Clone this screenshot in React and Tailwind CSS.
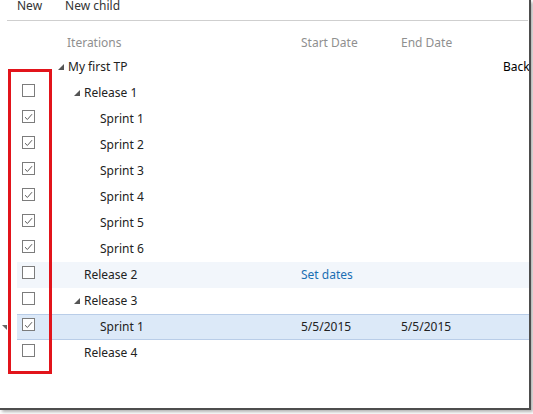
import React from "react";

const rows = [
  { name: "My first TP", depth: 0, expander: true, check: null, backlog: "Backlog" },
  { name: "Release 1", depth: 1, expander: true, check: false },
  { name: "Sprint 1", depth: 2, check: true },
  { name: "Sprint 2", depth: 2, check: true },
  { name: "Sprint 3", depth: 2, check: true },
  { name: "Sprint 4", depth: 2, check: true },
  { name: "Sprint 5", depth: 2, check: true },
  { name: "Sprint 6", depth: 2, check: true },
  { name: "Release 2", depth: 1, check: false, tint: true, setDates: true },
  { name: "Release 3", depth: 1, expander: true, check: false },
  { name: "Sprint 1", depth: 2, check: true, selected: true, start: "5/5/2015", end: "5/5/2015" },
  { name: "Release 4", depth: 1, check: false },
];

function Expander() {
  return (
    <svg width="6" height="6" viewBox="0 0 6 6" className="shrink-0">
      <polygon points="6,0 6,6 0,6" fill="#555" />
    </svg>
  );
}

function CheckBox({ checked }) {
  return (
    <div className="w-[13px] h-[13px] border border-[#7c7c7c] bg-white flex items-center justify-center">
      {checked && (
        <svg width="9" height="8" viewBox="0 0 9 8">
          <path d="M1 4.2 L3.4 6.5 L8 1.2" fill="none" stroke="#5a5a5a" strokeWidth="1" />
        </svg>
      )}
    </div>
  );
}

export default function App() {
  return (
    <div
      className="w-[533px] h-[414px] bg-white text-[12px] text-[#222]"
      style={{ fontFamily: '"Noto Sans", "Open Sans", sans-serif' }}
    >
      <div className="relative w-[531px] h-[410px] overflow-hidden border-r-2 border-b-2 border-[#4d4d4d] shadow-[2px_2px_3px_rgba(0,0,0,0.3)]">
        {/* Toolbar */}
        <div className="h-[20px] flex items-start pl-[17px] gap-[23px] leading-[12px] text-[#333]">
          <span>New</span>
          <span>New child</span>
        </div>
        <div className="ml-[7px] mr-[1px] h-px bg-[#cfcfcf]" />

        {/* Header */}
        <div className="mt-[10px] ml-[17px] h-[23px] grid grid-cols-[40px_244px_100px_1fr] items-center text-[#8f8f8f]">
          <div />
          <div className="pl-[10px]">Iterations</div>
          <div>Start Date</div>
          <div>End Date</div>
        </div>

        {/* Rows */}
        <div className="ml-[17px]">
          {rows.map((r, i) => (
            <div
              key={i}
              className={`relative h-[26px] grid grid-cols-[40px_244px_100px_101px_1fr] items-center ${
                r.selected
                  ? "bg-[#dce9f8] border-y border-[#b9cde8]"
                  : r.tint
                  ? "bg-[#f2f6fb]"
                  : ""
              }`}
            >
              {r.selected && (
                <svg width="5" height="5" viewBox="0 0 5 5" className="absolute left-[-15px] top-[10px]">
                  <polygon points="0,0 5,0 5,5" fill="#666" />
                </svg>
              )}
              <div className="pl-[5px] pb-[5px]">{r.check !== null && <CheckBox checked={r.check} />}</div>
              <div
                className="flex items-center"
                style={{ paddingLeft: r.depth * 16 + 1 }}
              >
                {r.expander ? <Expander /> : <span className="w-[6px]" />}
                <span className="ml-[4px] whitespace-nowrap">{r.name}</span>
              </div>
              <div className={r.setDates ? "text-[#1b6fb3]" : ""}>
                {r.setDates ? "Set dates" : r.start}
              </div>
              <div>{r.end}</div>
              <div className="whitespace-nowrap text-black pl-[1px]">{r.backlog}</div>
            </div>
          ))}
        </div>

        {/* Annotation box */}
        <div className="absolute left-[8px] top-[69px] w-[44px] h-[305px] border-[3px] border-[#e2141b]" />
      </div>
    </div>
  );
}
